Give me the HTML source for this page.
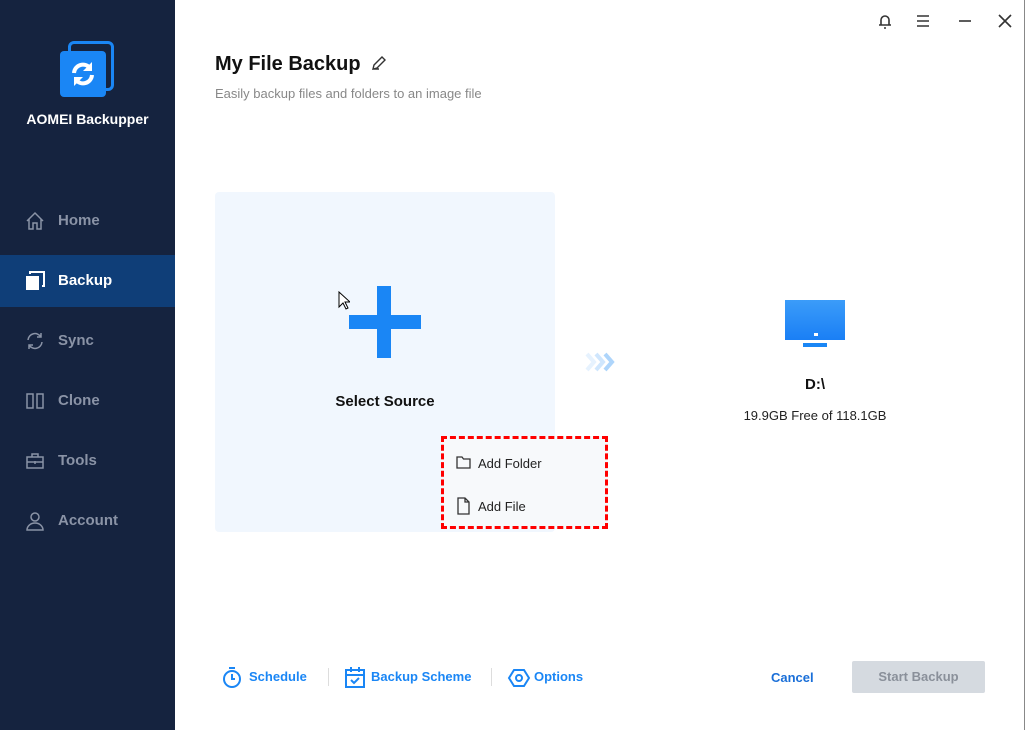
<!DOCTYPE html><html><head><style>
body{margin:0;width:1025px;height:730px;overflow:hidden;font-family:"Liberation Sans",sans-serif;background:#fff;position:relative}
.sb{position:absolute;left:0;top:0;width:175px;height:730px;background:#15233f}
.nav{position:absolute;left:0;width:175px;height:52px;color:#8a93a6;font-size:15px;font-weight:bold}
.nav span{position:absolute;left:58px;top:17px}
.nav svg{position:absolute;left:25px;top:16px}
.a{position:absolute}
</style></head><body>
<div class="sb">
<div class="a" style="left:68px;top:41px;width:46px;height:50px;border:3px solid #1a86f5;border-radius:6px;box-sizing:border-box"></div>
<div class="a" style="left:60px;top:51px;width:46px;height:46px;background:#1a86f5;border-radius:4px"></div>
<svg class="a" style="left:68px;top:59px" width="30" height="30" viewBox="0 0 30 30"><path d="M6 14a9 9 0 0 1 16-5" stroke="#fff" stroke-width="4" fill="none"/><path d="M24 3v9h-9z" fill="#fff"/><path d="M24 16a9 9 0 0 1-16 5" stroke="#fff" stroke-width="4" fill="none"/><path d="M6 27v-9h9z" fill="#fff"/></svg>
<div class="a" style="left:0;width:175px;top:111px;text-align:center;color:#fff;font-weight:bold;font-size:14px">AOMEI Backupper</div>
<div class="nav" style="top:195px"><svg width="20" height="20" viewBox="0 0 20 20" fill="none" stroke="#8a93a6" stroke-width="1.5"><path d="M2 10L10 2l8 8M4 8v10h4v-6h4v6h4V8"/></svg><span>Home</span></div>
<div class="nav" style="top:255px;background:#0f3e78;color:#fff"><svg width="20" height="20" viewBox="0 0 20 20"><rect x="1" y="5" width="13" height="14" fill="#fff"/><path d="M5 3V1h14v14h-2" stroke="#fff" stroke-width="2" fill="none"/></svg><span>Backup</span></div>
<div class="nav" style="top:315px"><svg width="20" height="20" viewBox="0 0 20 20" fill="none" stroke="#8a93a6" stroke-width="1.5"><path d="M3 9a7 7 0 0 1 13-3M17 11a7 7 0 0 1-13 3M16 2v4h-4M4 18v-4h4"/></svg><span>Sync</span></div>
<div class="nav" style="top:375px"><svg width="20" height="20" viewBox="0 0 20 20" fill="none" stroke="#8a93a6" stroke-width="1.5"><rect x="2" y="3" width="6" height="14"/><rect x="12" y="3" width="6" height="14"/></svg><span>Clone</span></div>
<div class="nav" style="top:435px"><svg width="20" height="20" viewBox="0 0 20 20" fill="none" stroke="#8a93a6" stroke-width="1.5"><rect x="2" y="6" width="16" height="11"/><path d="M7 6V3h6v3M2 11h16M10 10v3"/></svg><span>Tools</span></div>
<div class="nav" style="top:495px"><svg width="20" height="20" viewBox="0 0 20 20" fill="none" stroke="#8a93a6" stroke-width="1.5"><circle cx="10" cy="6" r="4"/><path d="M2 19a8 7 0 0 1 16 0z"/></svg><span>Account</span></div>
</div>
<div class="a" style="right:0;top:0;width:1px;height:730px;background:#888"></div>
<svg class="a" style="left:876px;top:12px" width="140" height="18" viewBox="0 0 140 18" fill="none" stroke="#333" stroke-width="1.6"><path d="M3 13h12M5 13V8a4 4 0 0 1 8 0v5M8 16h2"/><path d="M41 4h12M41 9h12M41 14h12"/><path d="M83 9h12"/><path d="M123 3l12 12M135 3l-12 12"/></svg>
<div class="a" style="left:215px;top:53px;font-size:20px;font-weight:bold;color:#111">My File Backup</div>
<svg class="a" style="left:371px;top:55px" width="16" height="16" viewBox="0 0 16 16" fill="none" stroke="#333" stroke-width="1.4"><path d="M2 14l1-4 8-8 3 3-8 8zM2 14h6"/></svg>
<div class="a" style="left:215px;top:86px;font-size:13px;color:#888">Easily backup files and folders to an image file</div>
<div class="a" style="left:215px;top:192px;width:340px;height:340px;background:#f1f7fe;border-radius:4px"></div>
<div class="a" style="left:377px;top:286px;width:14px;height:72px;background:#1a86f5"></div>
<div class="a" style="left:349px;top:315px;width:72px;height:14px;background:#1a86f5"></div>
<div class="a" style="left:215px;top:393px;width:340px;text-align:center;font-size:15px;font-weight:bold;color:#111">Select Source</div>
<svg class="a" style="left:585px;top:352px" width="32" height="20" viewBox="0 0 32 20" fill="none" stroke-width="4"><path d="M2 2l7 8-7 8" stroke="#e6f2fe"/><path d="M11 2l7 8-7 8" stroke="#cfe6fd"/><path d="M20 2l7 8-7 8" stroke="#aed5fb"/></svg>
<div class="a" style="left:785px;top:300px;width:60px;height:40px;background:linear-gradient(#3b9cf9,#1a7ff5)"></div>
<div class="a" style="left:803px;top:343px;width:24px;height:4px;background:#1a86f5"></div>
<div class="a" style="left:814px;top:333px;width:4px;height:3px;background:#fff"></div>
<div class="a" style="left:715px;top:376px;width:200px;text-align:center;font-size:15px;font-weight:bold;color:#111">D:\</div>
<div class="a" style="left:715px;top:408px;width:200px;text-align:center;font-size:13px;color:#222">19.9GB Free of 118.1GB</div>
<div class="a" style="left:441px;top:436px;width:167px;height:93px;border:3px dashed #f00;box-sizing:border-box;background:#f7f9fb"></div>
<svg class="a" style="left:456px;top:455px" width="15" height="60" viewBox="0 0 15 60" fill="none" stroke="#333" stroke-width="1.3"><path d="M1 2h5l1.5 2H14v9H1z"/><path d="M2 43h7l4 4v12H2zM9 43v4h4"/></svg>
<div class="a" style="left:478px;top:456px;font-size:13px;color:#222">Add Folder</div>
<div class="a" style="left:478px;top:499px;font-size:13px;color:#222">Add File</div>
<svg class="a" style="left:222px;top:666px" width="380" height="24" viewBox="0 0 380 24" fill="none" stroke="#1a86f5" stroke-width="2"><circle cx="10" cy="13" r="8"/><path d="M10 8v5h3M7 2h6"/><rect x="124" y="4" width="18" height="17"/><path d="M124 9h18M129 1v5M137 1v5M129 14l3 3 5-5"/><path d="M287 12l5-8h10l5 8-5 8h-10z"/><circle cx="297" cy="12" r="3"/></svg>
<div class="a" style="left:249px;top:669px;font-size:13px;font-weight:bold;color:#1a86f5">Schedule</div>
<div class="a" style="left:328px;top:668px;width:1px;height:18px;background:#ddd"></div>
<div class="a" style="left:371px;top:669px;font-size:13px;font-weight:bold;color:#1a86f5">Backup Scheme</div>
<div class="a" style="left:491px;top:668px;width:1px;height:18px;background:#ddd"></div>
<div class="a" style="left:534px;top:669px;font-size:13px;font-weight:bold;color:#1a86f5">Options</div>
<div class="a" style="left:771px;top:670px;font-size:13px;font-weight:bold;color:#1a6fd8">Cancel</div>
<div class="a" style="left:852px;top:661px;width:133px;height:32px;background:#d5dae0;border-radius:2px;color:#8a909a;font-size:13px;font-weight:bold;text-align:center;line-height:32px">Start Backup</div>
<svg class="a" style="left:338px;top:291px" width="12" height="20" viewBox="0 0 12 20"><path d="M1 1v15l4-4 3 6 2-1-3-6h5z" fill="#fff" stroke="#000"/></svg>
</body></html>
